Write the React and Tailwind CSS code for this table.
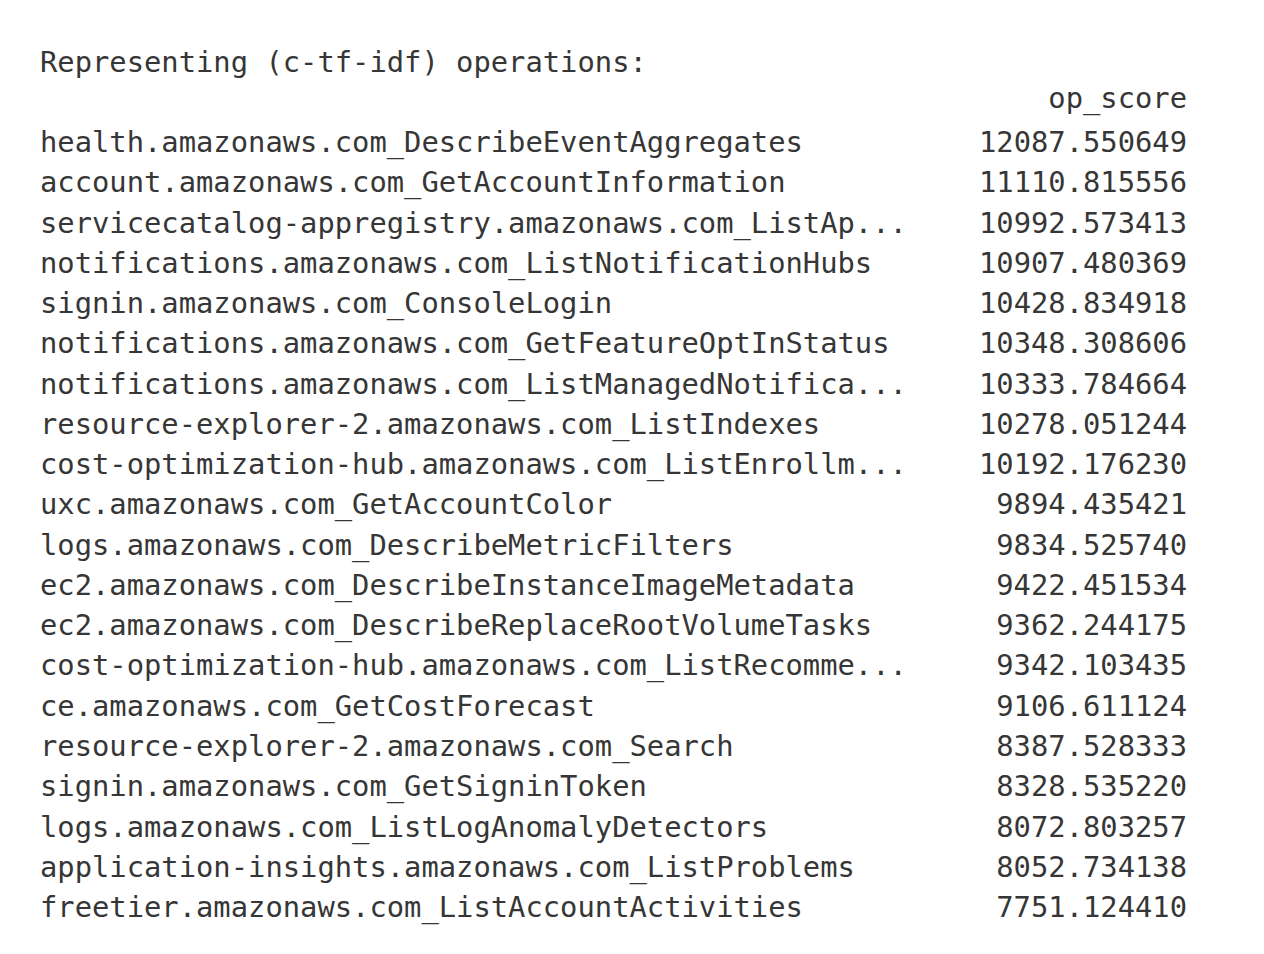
import React from "react";

const ROWS = [
  ["health.amazonaws.com_DescribeEventAggregates", "12087.550649"],
  ["account.amazonaws.com_GetAccountInformation", "11110.815556"],
  ["servicecatalog-appregistry.amazonaws.com_ListAp...", "10992.573413"],
  ["notifications.amazonaws.com_ListNotificationHubs", "10907.480369"],
  ["signin.amazonaws.com_ConsoleLogin", "10428.834918"],
  ["notifications.amazonaws.com_GetFeatureOptInStatus", "10348.308606"],
  ["notifications.amazonaws.com_ListManagedNotifica...", "10333.784664"],
  ["resource-explorer-2.amazonaws.com_ListIndexes", "10278.051244"],
  ["cost-optimization-hub.amazonaws.com_ListEnrollm...", "10192.176230"],
  ["uxc.amazonaws.com_GetAccountColor", "9894.435421"],
  ["logs.amazonaws.com_DescribeMetricFilters", "9834.525740"],
  ["ec2.amazonaws.com_DescribeInstanceImageMetadata", "9422.451534"],
  ["ec2.amazonaws.com_DescribeReplaceRootVolumeTasks", "9362.244175"],
  ["cost-optimization-hub.amazonaws.com_ListRecomme...", "9342.103435"],
  ["ce.amazonaws.com_GetCostForecast", "9106.611124"],
  ["resource-explorer-2.amazonaws.com_Search", "8387.528333"],
  ["signin.amazonaws.com_GetSigninToken", "8328.535220"],
  ["logs.amazonaws.com_ListLogAnomalyDetectors", "8072.803257"],
  ["application-insights.amazonaws.com_ListProblems", "8052.734138"],
  ["freetier.amazonaws.com_ListAccountActivities", "7751.124410"],
];

export default function App() {
  return (
    <div className="min-h-[954px] w-[1264px] bg-white text-[#363636] font-['DejaVu_Sans_Mono','Liberation_Mono',monospace] text-[28.8px] whitespace-pre">
      <div className="pt-[42px] pl-[40px] w-[1187px]">
        <div className="leading-[40px]">Representing (c-tf-idf) operations:</div>

        {/* column header */}
        <div className="leading-[32px] text-right">op_score</div>

        {/* table body */}
        <div className="mt-[8px] flex flex-col">
          {ROWS.map(([op, score]) => (
            <div key={op} className="flex justify-between leading-[40.26px]">
              <span>{op}</span>
              <span>{score}</span>
            </div>
          ))}
        </div>
      </div>
    </div>
  );
}
